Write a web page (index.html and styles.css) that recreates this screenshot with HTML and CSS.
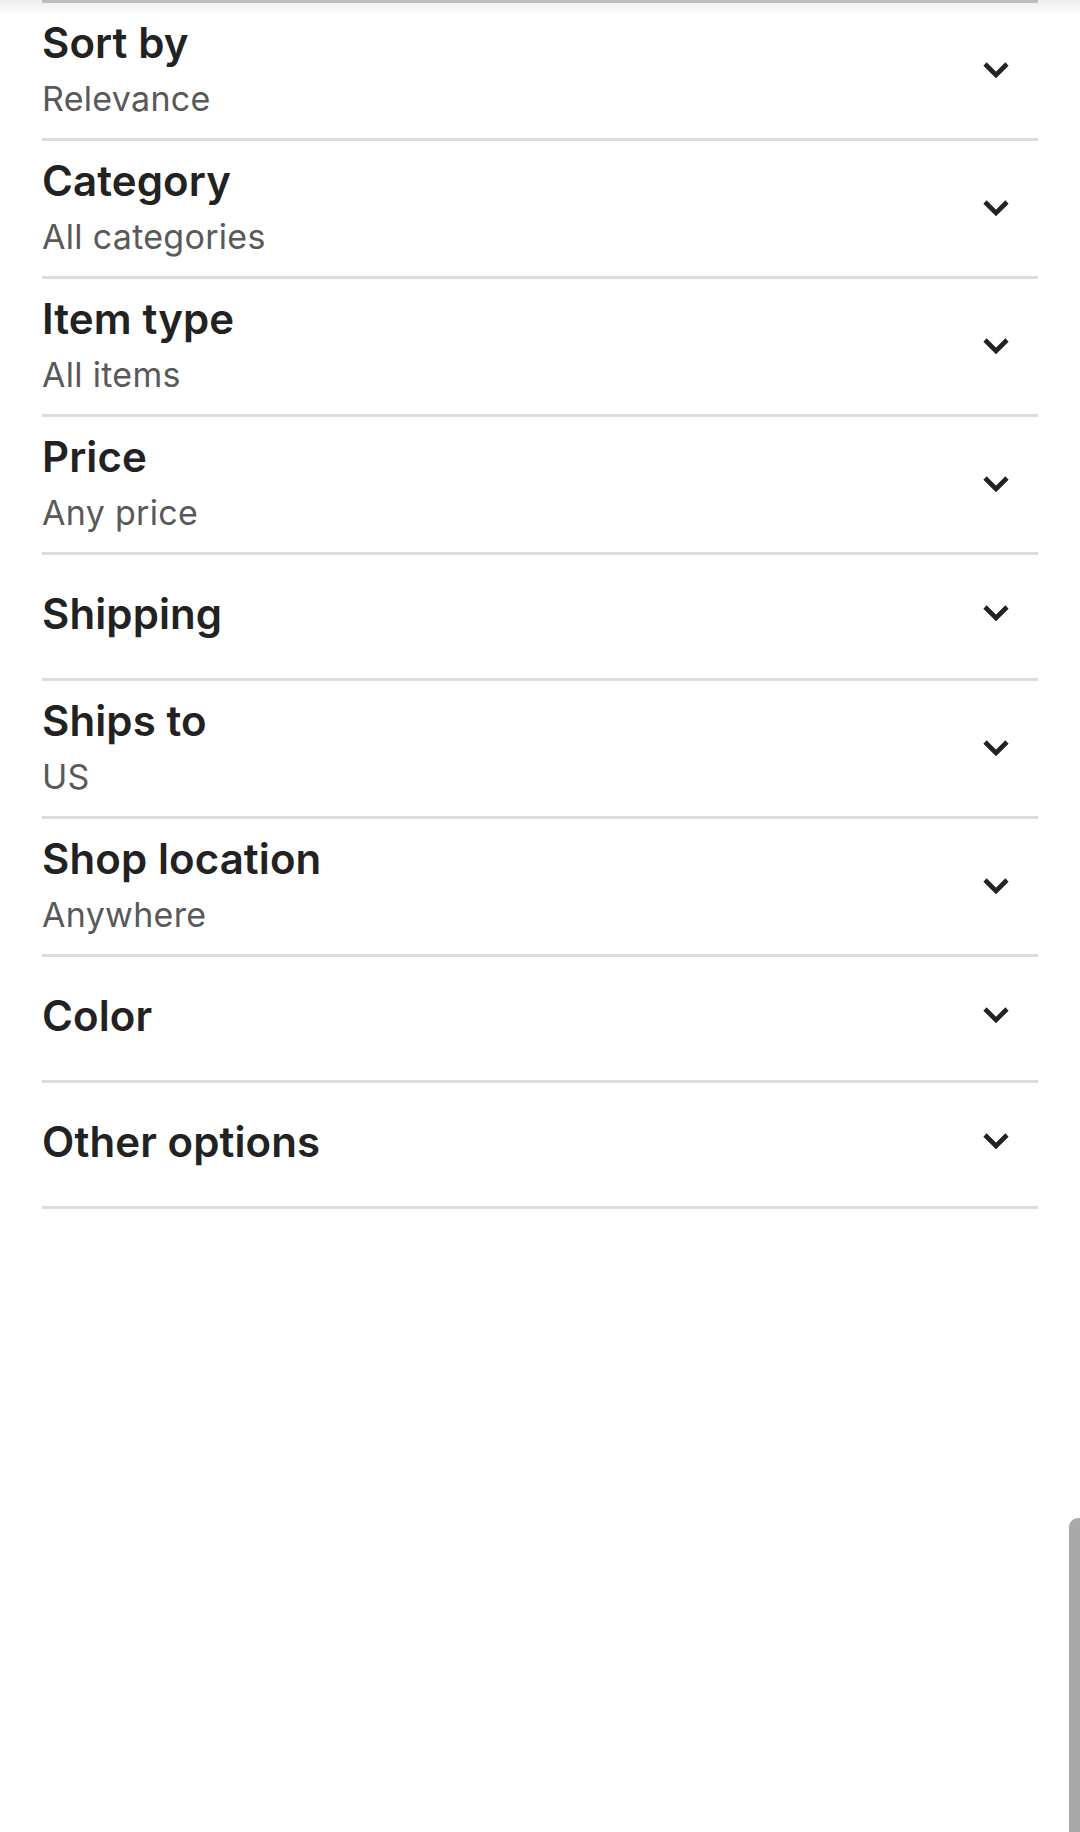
FILE: index.html
```html
<!DOCTYPE html>
<html lang="en">
<head>
<meta charset="utf-8">
<title>Filters</title>
<link rel="stylesheet" href="styles.css">
</head>
<body>
<div class="shade"></div>
<div class="panel">
  <div class="topline"></div>
  <div class="row two">
    <div class="text"><div class="title">Sort by</div><div class="sub">Relevance</div></div>
    <svg class="chev" viewBox="0 0 28 18" width="28" height="18"><polyline points="3,3 14,14 25,3"/></svg>
  </div>
  <div class="row two">
    <div class="text"><div class="title">Category</div><div class="sub">All categories</div></div>
    <svg class="chev" viewBox="0 0 28 18" width="28" height="18"><polyline points="3,3 14,14 25,3"/></svg>
  </div>
  <div class="row two">
    <div class="text"><div class="title">Item type</div><div class="sub">All items</div></div>
    <svg class="chev" viewBox="0 0 28 18" width="28" height="18"><polyline points="3,3 14,14 25,3"/></svg>
  </div>
  <div class="row two">
    <div class="text"><div class="title">Price</div><div class="sub">Any price</div></div>
    <svg class="chev" viewBox="0 0 28 18" width="28" height="18"><polyline points="3,3 14,14 25,3"/></svg>
  </div>
  <div class="row one">
    <div class="text"><div class="title">Shipping</div></div>
    <svg class="chev" viewBox="0 0 28 18" width="28" height="18"><polyline points="3,3 14,14 25,3"/></svg>
  </div>
  <div class="row two">
    <div class="text"><div class="title">Ships to</div><div class="sub">US</div></div>
    <svg class="chev" viewBox="0 0 28 18" width="28" height="18"><polyline points="3,3 14,14 25,3"/></svg>
  </div>
  <div class="row two">
    <div class="text"><div class="title">Shop location</div><div class="sub">Anywhere</div></div>
    <svg class="chev" viewBox="0 0 28 18" width="28" height="18"><polyline points="3,3 14,14 25,3"/></svg>
  </div>
  <div class="row one">
    <div class="text"><div class="title">Color</div></div>
    <svg class="chev" viewBox="0 0 28 18" width="28" height="18"><polyline points="3,3 14,14 25,3"/></svg>
  </div>
  <div class="row one">
    <div class="text"><div class="title">Other options</div></div>
    <svg class="chev" viewBox="0 0 28 18" width="28" height="18"><polyline points="3,3 14,14 25,3"/></svg>
  </div>
</div>
<div class="scrollbar"></div>
</body>
</html>
```
FILE: styles.css
```css
html, body {
  margin: 0;
  padding: 0;
  background: #fff;
}
body {
  width: 1080px;
  height: 1832px;
  position: relative;
  overflow: hidden;
  font-family: Inter, "Noto Sans", "Liberation Sans", sans-serif;
}
.shade {
  position: absolute;
  left: 0;
  top: 0;
  width: 1080px;
  height: 16px;
  background: linear-gradient(#ececec, rgba(255,255,255,0));
}
.panel {
  position: relative;
  margin-left: 42px;
  width: 996px;
}
.topline {
  height: 3px;
  background: #bdbdbd;
}
.row {
  display: flex;
  align-items: center;
  justify-content: space-between;
  border-bottom: 3px solid #dddddd;
  box-sizing: border-box;
}
.row.two {
  height: 138px;
  padding: 14px 0 9px;
}
.row.one {
  height: 126px;
  padding: 33px 0 38px;
}
.row.two .chev {
  margin-bottom: 6px;
}
.row.one .chev {
  margin-bottom: 2px;
}
.title {
  font-size: 42px;
  line-height: 52px;
  font-weight: 600;
  color: #222222;
  letter-spacing: 0.1px;
}
.sub {
  font-size: 34px;
  line-height: 60px;
  font-weight: 400;
  color: #595959;
  letter-spacing: 0.3px;
}
.chev {
  margin-right: 28px;
  fill: none;
  stroke: #222222;
  stroke-width: 4.6;
}
.scrollbar {
  position: absolute;
  right: 0;
  top: 1518px;
  width: 11px;
  height: 320px;
  background: #a9a9a9;
  border-top-left-radius: 9px;
}
```
